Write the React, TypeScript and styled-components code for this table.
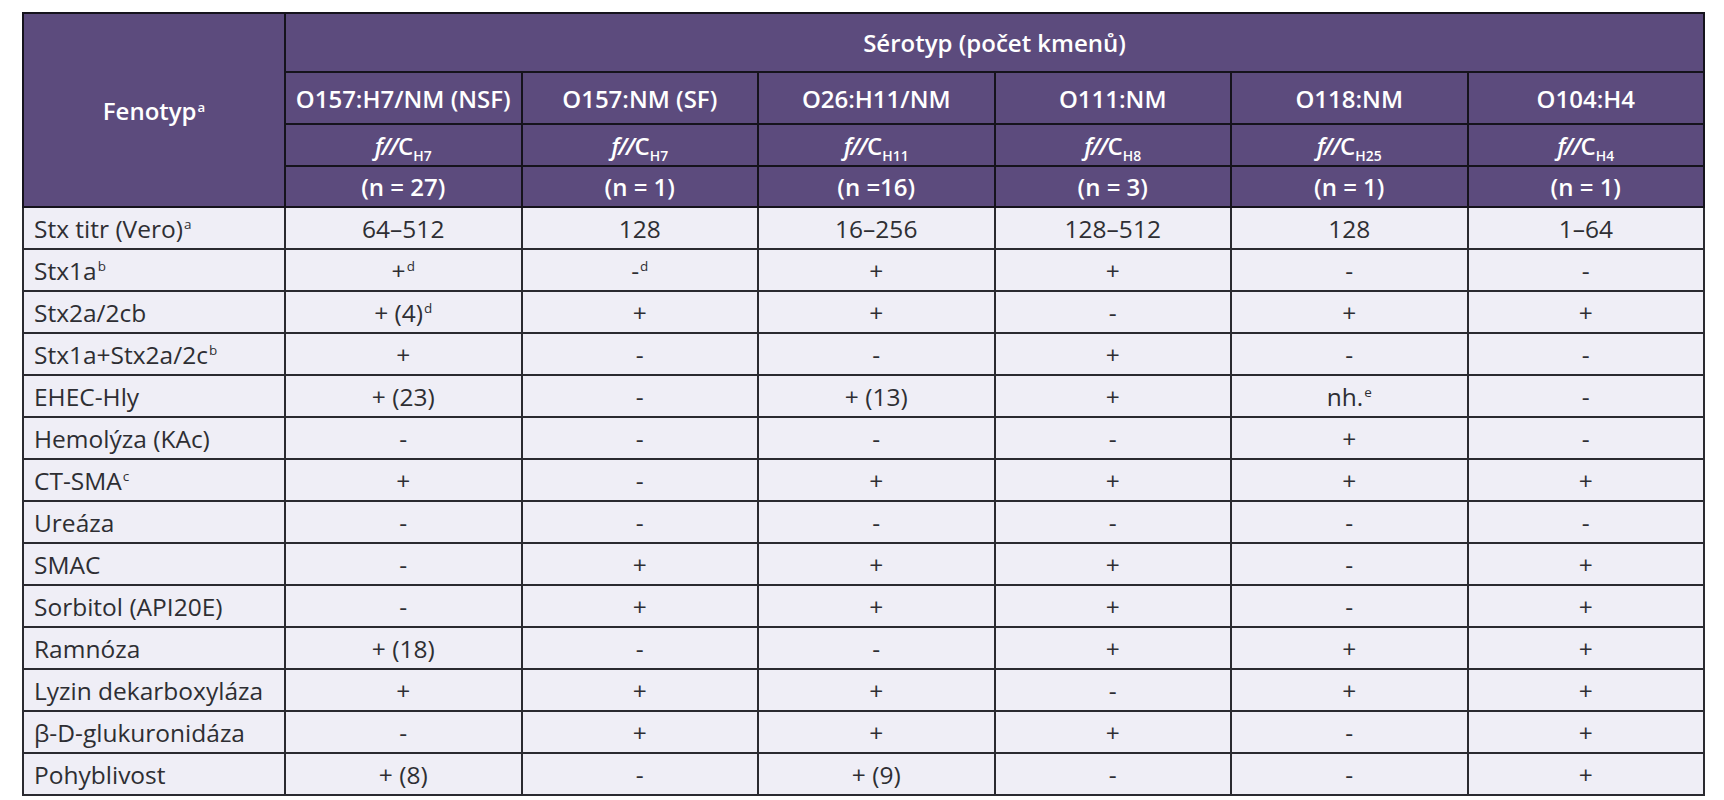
import React from "react";
import styled, { createGlobalStyle } from "styled-components";

const Global = createGlobalStyle`
  html, body { margin: 0; padding: 0; background: #ffffff; }
  body { font-family: "Open Sans", "Liberation Sans", sans-serif; }
`;

const Page = styled.div`
  padding: 12px 21px 0 22px;
`;

const Table = styled.table`
  width: 1681px;
  table-layout: fixed;
  border-collapse: collapse;
  border: 2px solid #1c1c22;
`;

const HeadRow = styled.tr<{ $h: number }>`
  height: ${(p) => p.$h}px;
`;

const HeadCell = styled.th`
  background: #5c4b7d;
  color: #ffffff;
  font-weight: 600;
  font-size: 24px;
  text-align: center;
  vertical-align: middle;
  border: 2px solid #15131c;
  padding: 0 4px;
  white-space: nowrap;
`;

const BodyRow = styled.tr`
  height: 42px;
`;

const LabelCell = styled.td`
  background: #efeef6;
  color: #2e2e33;
  font-size: 24.5px;
  text-align: left;
  padding: 0 10px;
  border: 2px solid #2a2a30;
  white-space: nowrap;
`;

const ValueCell = styled.td`
  background: #efeef6;
  color: #2e2e33;
  font-size: 24.5px;
  text-align: center;
  padding: 0 6px;
  border: 2px solid #2a2a30;
  white-space: nowrap;
`;

const Sup = styled.sup`
  font-size: 0.55em;
  line-height: 0;
  vertical-align: 0.6em;
  margin-left: 1px;
`;

const Gene = styled.span`
  font-style: italic;
  letter-spacing: -1.5px;
  margin-right: 1px;
`;

const Sub = styled.sub`
  font-size: 0.58em;
  line-height: 0;
  vertical-align: -0.4em;
`;

type Cell = { v: string; s?: string };
type Row = { label: string; ls?: string; cells: Cell[] };

const c = (v: string, s?: string): Cell => ({ v, s });

const serotypes = [
  { name: "O157:H7/NM (NSF)", h: "H7", n: "(n = 27)" },
  { name: "O157:NM (SF)", h: "H7", n: "(n = 1)" },
  { name: "O26:H11/NM", h: "H11", n: "(n =16)" },
  { name: "O111:NM", h: "H8", n: "(n = 3)" },
  { name: "O118:NM", h: "H25", n: "(n = 1)" },
  { name: "O104:H4", h: "H4", n: "(n = 1)" },
];

const rows: Row[] = [
  { label: "Stx titr (Vero)", ls: "a", cells: [c("64–512"), c("128"), c("16–256"), c("128–512"), c("128"), c("1–64")] },
  { label: "Stx1a", ls: "b", cells: [c("+", "d"), c("-", "d"), c("+"), c("+"), c("-"), c("-")] },
  { label: "Stx2a/2cb", cells: [c("+ (4)", "d"), c("+"), c("+"), c("-"), c("+"), c("+")] },
  { label: "Stx1a+Stx2a/2c", ls: "b", cells: [c("+"), c("-"), c("-"), c("+"), c("-"), c("-")] },
  { label: "EHEC-Hly", cells: [c("+ (23)"), c("-"), c("+ (13)"), c("+"), c("nh.", "e"), c("-")] },
  { label: "Hemolýza (KAc)", cells: [c("-"), c("-"), c("-"), c("-"), c("+"), c("-")] },
  { label: "CT-SMA", ls: "c", cells: [c("+"), c("-"), c("+"), c("+"), c("+"), c("+")] },
  { label: "Ureáza", cells: [c("-"), c("-"), c("-"), c("-"), c("-"), c("-")] },
  { label: "SMAC", cells: [c("-"), c("+"), c("+"), c("+"), c("-"), c("+")] },
  { label: "Sorbitol (API20E)", cells: [c("-"), c("+"), c("+"), c("+"), c("-"), c("+")] },
  { label: "Ramnóza", cells: [c("+ (18)"), c("-"), c("-"), c("+"), c("+"), c("+")] },
  { label: "Lyzin dekarboxyláza", cells: [c("+"), c("+"), c("+"), c("-"), c("+"), c("+")] },
  { label: "β-D-glukuronidáza", cells: [c("-"), c("+"), c("+"), c("+"), c("-"), c("+")] },
  { label: "Pohyblivost", cells: [c("+ (8)"), c("-"), c("+ (9)"), c("-"), c("-"), c("+")] },
];

export default function App() {
  return (
    <Page>
      <Global />
      <Table>
        <colgroup>
          <col style={{ width: 262 }} />
          {serotypes.map((s) => (
            <col key={s.name} style={{ width: 236.5 }} />
          ))}
        </colgroup>
        <thead>
          <HeadRow $h={59}>
            <HeadCell rowSpan={4}>
              Fenotyp<Sup>a</Sup>
            </HeadCell>
            <HeadCell colSpan={6}>Sérotyp (počet kmenů)</HeadCell>
          </HeadRow>
          <HeadRow $h={52}>
            {serotypes.map((s) => (
              <HeadCell key={s.name}>{s.name}</HeadCell>
            ))}
          </HeadRow>
          <HeadRow $h={42}>
            {serotypes.map((s) => (
              <HeadCell key={s.name}>
                <Gene>f//</Gene>C<Sub>{s.h}</Sub>
              </HeadCell>
            ))}
          </HeadRow>
          <HeadRow $h={41}>
            {serotypes.map((s) => (
              <HeadCell key={s.name}>{s.n}</HeadCell>
            ))}
          </HeadRow>
        </thead>
        <tbody>
          {rows.map((r) => (
            <BodyRow key={r.label}>
              <LabelCell>
                {r.label}
                {r.ls && <Sup>{r.ls}</Sup>}
              </LabelCell>
              {r.cells.map((cell, i) => (
                <ValueCell key={i}>
                  {cell.v}
                  {cell.s && <Sup>{cell.s}</Sup>}
                </ValueCell>
              ))}
            </BodyRow>
          ))}
        </tbody>
      </Table>
    </Page>
  );
}
